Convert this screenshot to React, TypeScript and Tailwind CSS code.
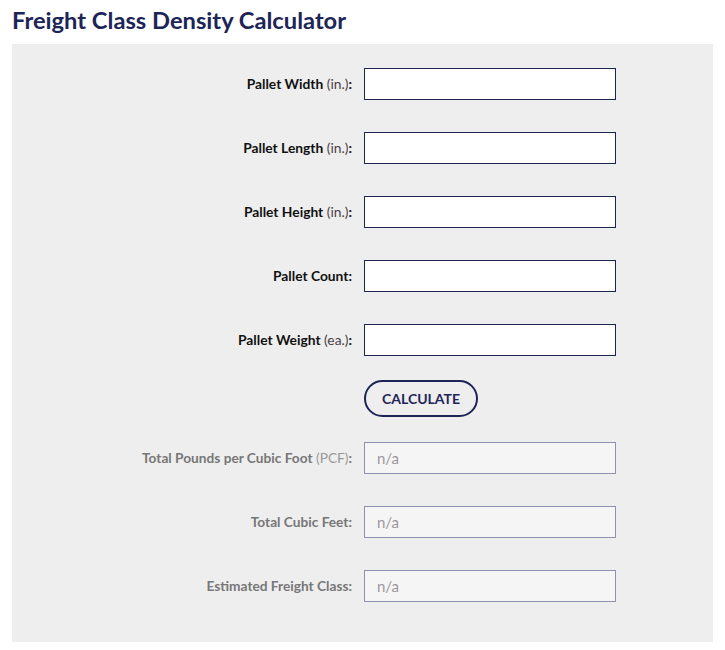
import React from "react";

const inputs = [
  { label: "Pallet Width", unit: "(in.)" },
  { label: "Pallet Length", unit: "(in.)" },
  { label: "Pallet Height", unit: "(in.)" },
  { label: "Pallet Count", unit: "" },
  { label: "Pallet Weight", unit: "(ea.)" },
];

const outputs = [
  { label: "Total Pounds per Cubic Foot", unit: "(PCF)" },
  { label: "Total Cubic Feet", unit: "" },
  { label: "Estimated Freight Class", unit: "" },
];

export default function App() {
  return (
    <div className="w-[725px] bg-white px-3 pb-[9px]" style={{ fontFamily: "Lato, 'Open Sans', sans-serif" }}>
      <h1 className="h-[44px] pt-[5px] text-[23.7px] font-bold leading-[30px] text-[#1d2557]">
        Freight Class Density Calculator
      </h1>
      <div className="flex flex-col bg-[#eeeeee] pt-6 pb-[40px]">
        {inputs.map((f) => (
          <div key={f.label} className="mb-8 flex items-center">
            <label className="w-[340px] text-right text-[13.8px] font-bold text-[#111]">
              {f.label}
              {f.unit && <span className="font-normal text-[#4a3f45]"> {f.unit}</span>}:
            </label>
            <input className="ml-3 h-8 w-[252px] border border-[#1d2557] bg-white" />
          </div>
        ))}
        <div className="-mt-2 mb-[25px] flex pl-[352px]">
          <button className="h-[37px] w-[114px] rounded-full border-2 border-[#1d2557] text-[14px] font-bold text-[#1d2557]">
            CALCULATE
          </button>
        </div>
        {outputs.map((f, i) => (
          <div key={f.label} className={`flex items-center ${i < outputs.length - 1 ? "mb-8" : ""}`}>
            <label className="w-[340px] text-right text-[13.7px] font-bold text-[#777]">
              {f.label}
              {f.unit && <span className="font-normal text-[#999]"> {f.unit}</span>}:
            </label>
            <input
              readOnly
              placeholder="n/a"
              className="ml-3 h-8 w-[252px] border border-[#8d91ad] bg-[#f5f5f5] px-3 text-[15px] text-[#999] placeholder:text-[#999]"
            />
          </div>
        ))}
      </div>
    </div>
  );
}
